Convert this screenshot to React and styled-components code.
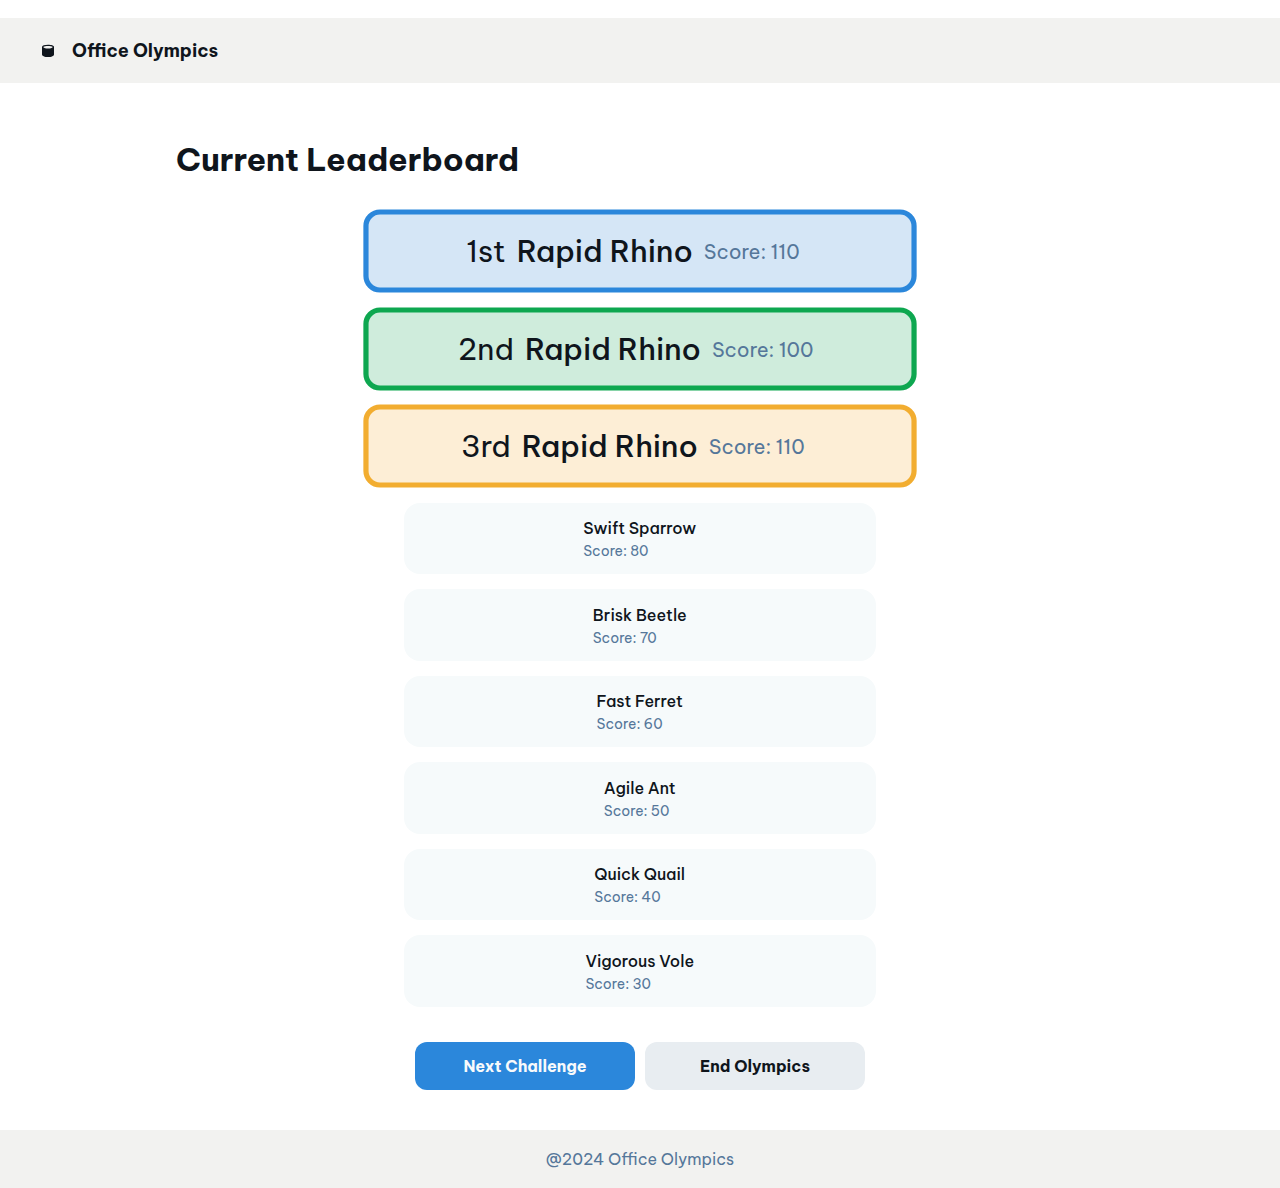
import React from "react";
import styled, { createGlobalStyle } from "styled-components";

const GlobalStyle = createGlobalStyle`
  * { box-sizing: border-box; }
  body {
    margin: 0;
    background: #fff;
    color: #0f151c;
    font-family: "Be Vietnam Pro", Inter, "Noto Sans", sans-serif;
  }
`;

const Page = styled.div`
  display: flex;
  flex-direction: column;
  height: 1188px;
  padding-top: 18px;
  overflow: hidden;
`;

const Header = styled.header`
  display: flex;
  align-items: center;
  gap: 16px;
  height: 65px;
  flex: none;
  padding: 0 40px;
  background: #f2f2f0;
`;

const Logo = styled.svg`
  width: 16px;
  height: 16px;
  flex: none;
`;

const Brand = styled.h2`
  margin: 0;
  font-size: 18px;
  line-height: 23px;
  font-weight: 700;
`;

const Main = styled.main`
  display: flex;
  flex-direction: column;
  width: 960px;
  margin: 0 auto;
  padding: 52px 16px 0;
  flex: 1;
`;

const Title = styled.h1`
  margin: 0 0 28.2px;
  font-size: 32px;
  line-height: 48px;
  font-weight: 700;
`;

const Board = styled.div`
  display: flex;
  flex-direction: column;
  align-items: center;
  gap: 15px;
`;

const Podium = styled.div`
  display: flex;
  flex-direction: column;
  align-items: center;
  gap: 18px;
  padding: 0 0 2px;
`;

const PodiumCard = styled.div`
  display: flex;
  align-items: center;
  justify-content: center;
  gap: 10.6px;
  width: 531.7px;
  height: 79.6px;
  padding: 1.5px ${(p) => p.$inset}px 0 0;
  border: 5px solid ${(p) => p.$border};
  border-radius: 16px;
  background: ${(p) => p.$fill};
  transform: scale(1.04);
`;

const Line = styled.span`
  display: block;
  white-space: nowrap;
`;

const Rank = styled(Line)`
  font-size: 28.8px;
  line-height: 46px;
  font-weight: 400;
`;

const PodiumName = styled(Line)`
  font-size: 28.8px;
  line-height: 46px;
  font-weight: 500;
`;

const PodiumScore = styled(Line)`
  font-size: 19.2px;
  line-height: 30px;
  color: #55779a;
`;

const Row = styled.div`
  display: flex;
  justify-content: center;
  width: 472px;
  height: 71.5px;
  padding: 13.5px 0.5px 0 0;
  border-radius: 16px;
  background: #f6fafb;
`;

const Name = styled(Line)`
  font-size: 16px;
  line-height: 24px;
  font-weight: 500;
`;

const Score = styled(Line)`
  margin-top: 1px;
  font-size: 14px;
  line-height: 21px;
  color: #55779a;
`;

const Actions = styled.div`
  display: flex;
  justify-content: center;
  gap: 10px;
  margin-top: 35px;
`;

const Button = styled.button`
  width: 220px;
  height: 48px;
  padding: 0;
  border: 0;
  border-radius: 12px;
  font: inherit;
  font-size: 16px;
  font-weight: 700;
  color: ${(p) => (p.$primary ? "#f8fafb" : "#0f151c")};
  background: ${(p) => (p.$primary ? "#2b87db" : "#e8edf1")};
`;

const Footer = styled.footer`
  display: flex;
  align-items: center;
  justify-content: center;
  height: 58px;
  flex: none;
  background: #f2f2f0;
  color: #55779a;
  font-size: 16px;
`;

const podium = [
  { rank: "1st", name: "Rapid Rhino", score: 110, border: "#2b87db", fill: "#d5e6f6", inset: 13 },
  { rank: "2nd", name: "Rapid Rhino", score: 100, border: "#0ea750", fill: "#cfecdc", inset: 8 },
  { rank: "3rd", name: "Rapid Rhino", score: 110, border: "#f2ad30", fill: "#fdeed6", inset: 13.5 },
];

const players = [
  { name: "Swift Sparrow", score: 80 },
  { name: "Brisk Beetle", score: 70 },
  { name: "Fast Ferret", score: 60 },
  { name: "Agile Ant", score: 50 },
  { name: "Quick Quail", score: 40 },
  { name: "Vigorous Vole", score: 30 },
];

export default function App() {
  return (
    <>
      <GlobalStyle />
      <Page>
        <Header>
          <Logo viewBox="0 0 16 16" aria-hidden="true">
            <path d="M2 4.1C2 2.5 4.6 1.700 8 1.700s6 .8 6 2.400v7.300c0 1.500-2.600 2.600-6 2.600s-6-1.100-6-2.600z" fill="#0f151c" />
            <path d="M3.2 4C4.3 3.200 6 2.900 8 2.900s3.700.3 4.800 1.100C12 5.100 10.200 5.600 8 5.600S4 5.100 3.200 4z" fill="#f2f2f0" />
          </Logo>
          <Brand>Office Olympics</Brand>
        </Header>
        <Main>
          <Title>Current Leaderboard</Title>
          <Board>
            <Podium>
              {podium.map((p) => (
                <PodiumCard key={p.rank} $border={p.border} $fill={p.fill} $inset={p.inset}>
                  <Rank>{p.rank}</Rank>
                  <PodiumName>{p.name}</PodiumName>
                  <PodiumScore>Score: {p.score}</PodiumScore>
                </PodiumCard>
              ))}
            </Podium>
            {players.map((p) => (
              <Row key={p.name}>
                <div>
                  <Name>{p.name}</Name>
                  <Score>Score: {p.score}</Score>
                </div>
              </Row>
            ))}
          </Board>
          <Actions>
            <Button $primary>Next Challenge</Button>
            <Button>End Olympics</Button>
          </Actions>
        </Main>
        <Footer>
          <Line>@2024 Office Olympics</Line>
        </Footer>
      </Page>
    </>
  );
}
